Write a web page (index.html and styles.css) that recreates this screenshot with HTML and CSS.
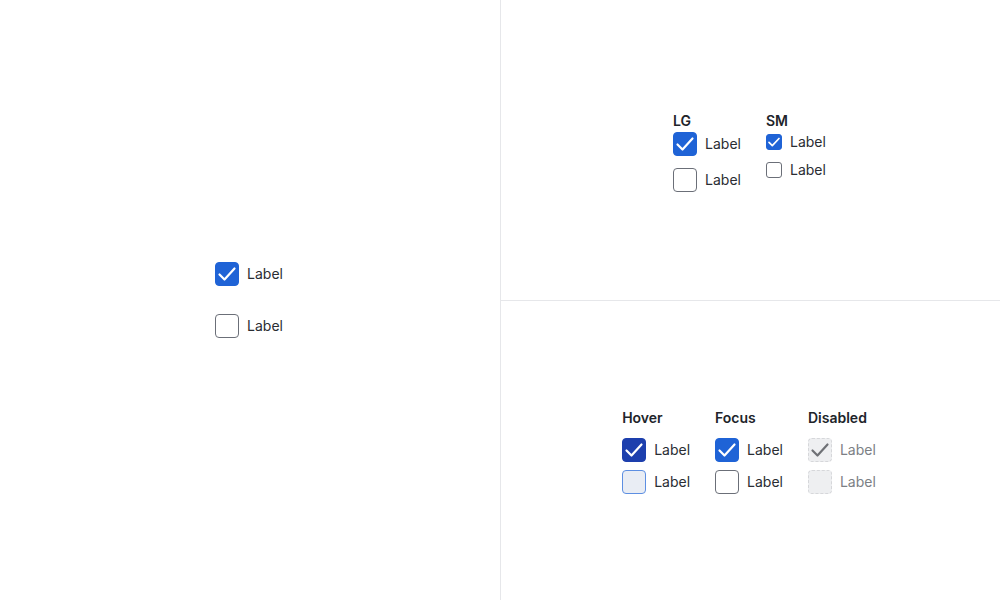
FILE: index.html
```html
<!DOCTYPE html>
<html>
<head>
<meta charset="utf-8">
<link rel="stylesheet" href="styles.css">
</head>
<body>
<div class="page">
  <section class="panel panel-left">
    <div class="stack stack-default">
      <label class="cb"><span class="box lg checked"><svg viewBox="0 0 24 24"><path d="M4.5 12.5l5 5L19.5 6.5"/></svg></span><span class="txt">Label</span></label>
      <label class="cb"><span class="box lg"></span><span class="txt">Label</span></label>
    </div>
  </section>
  <div class="right">
    <section class="panel panel-top">
      <div class="cols">
        <div class="col">
          <h3 class="title">LG</h3>
          <div class="stack stack-lg">
            <label class="cb"><span class="box lg checked"><svg viewBox="0 0 24 24"><path d="M4.5 12.5l5 5L19.5 6.5"/></svg></span><span class="txt">Label</span></label>
            <label class="cb"><span class="box lg"></span><span class="txt">Label</span></label>
          </div>
        </div>
        <div class="col">
          <h3 class="title">SM</h3>
          <div class="stack stack-sm">
            <label class="cb"><span class="box sm checked"><svg viewBox="0 0 16 16"><path d="M3 8.3l3.3 3.3L13 4.5"/></svg></span><span class="txt">Label</span></label>
            <label class="cb"><span class="box sm"></span><span class="txt">Label</span></label>
          </div>
        </div>
      </div>
    </section>
    <section class="panel panel-bottom">
      <div class="cols">
        <div class="col">
          <h3 class="title">Hover</h3>
          <div class="stack stack-state">
            <label class="cb"><span class="box lg checked hover"><svg viewBox="0 0 24 24"><path d="M4.5 12.5l5 5L19.5 6.5"/></svg></span><span class="txt">Label</span></label>
            <label class="cb"><span class="box lg hover-empty"></span><span class="txt">Label</span></label>
          </div>
        </div>
        <div class="col">
          <h3 class="title">Focus</h3>
          <div class="stack stack-state">
            <label class="cb"><span class="box lg checked"><svg viewBox="0 0 24 24"><path d="M4.5 12.5l5 5L19.5 6.5"/></svg></span><span class="txt">Label</span></label>
            <label class="cb"><span class="box lg"></span><span class="txt">Label</span></label>
          </div>
        </div>
        <div class="col">
          <h3 class="title">Disabled</h3>
          <div class="stack stack-state">
            <label class="cb disabled"><span class="box lg dis"><svg viewBox="0 0 24 24"><path d="M4.5 12.5l5 5L19.5 6.5"/></svg></span><span class="txt">Label</span></label>
            <label class="cb disabled"><span class="box lg dis"></span><span class="txt">Label</span></label>
          </div>
        </div>
      </div>
    </section>
  </div>
</div>
</body>
</html>
```

FILE: styles.css
```css
* { box-sizing: border-box; }
html, body { margin: 0; padding: 0; background: #fff; }
body {
  font-family: "Inter", "Noto Sans", "Liberation Sans", sans-serif;
  color: #21242a;
  font-size: 14px;
}
.page {
  display: flex;
  width: 1000px;
  height: 600px;
}
.panel {
  display: flex;
  align-items: center;
  justify-content: center;
}
.panel-left {
  width: 500px;
  height: 600px;
  padding-right: 2px;
}
.right {
  display: flex;
  flex-direction: column;
  width: 500px;
  border-left: 1px solid #e6e7ea;
}
.panel-top {
  height: 300px;
  padding-top: 3px;
  padding-right: 2px;
}
.panel-bottom {
  height: 300px;
  border-top: 1px solid #e6e7ea;
  padding-top: 2px;
  padding-right: 3px;
}
.stack {
  display: flex;
  flex-direction: column;
}
.stack-default { gap: 28px; }
.stack-lg { gap: 12px; }
.stack-sm { gap: 8px; }
.stack-state { gap: 8px; }
.cols {
  display: flex;
  gap: 25px;
}
.col {
  display: flex;
  flex-direction: column;
}
.title {
  margin: 0;
  font-size: 14px;
  font-weight: 600;
  line-height: 18px;
  color: #21242a;
}
.panel-top .title { margin-bottom: 2px; }
.panel-bottom .title { margin-bottom: 11px; }
.cb {
  display: flex;
  align-items: center;
  gap: 8px;
  line-height: 20px;
}
.txt { font-size: 14px; color: #2a2d33; }
.box {
  display: flex;
  align-items: center;
  justify-content: center;
  border: 1px solid #6b6f78;
  background: #fff;
}
.box.lg { width: 24px; height: 24px; border-radius: 4px; }
.box.sm { width: 16px; height: 16px; border-radius: 3px; }
.box svg { width: 100%; height: 100%; overflow: visible; }
.box.checked svg, .box.dis svg { margin: -1px; width: calc(100% + 2px); height: calc(100% + 2px); flex: none; }
.box path {
  fill: none;
  stroke: #fff;
  stroke-width: 2.2;
  stroke-linecap: round;
  stroke-linejoin: round;
}
.box.sm path { stroke-width: 1.7; }
.box.checked { background: #1f63d6; border-color: #1f63d6; }
.box.checked.hover { background: #1d3fad; border-color: #1d3fad; }
.box.hover-empty { background: #e9edf4; border-color: #5d8fe2; }
.box.dis { background: #eeeff1; border: 1px dashed #d6d7da; }
.box.dis path { stroke: #6f7176; }
.cb.disabled .txt { color: #7c7f85; }
```
